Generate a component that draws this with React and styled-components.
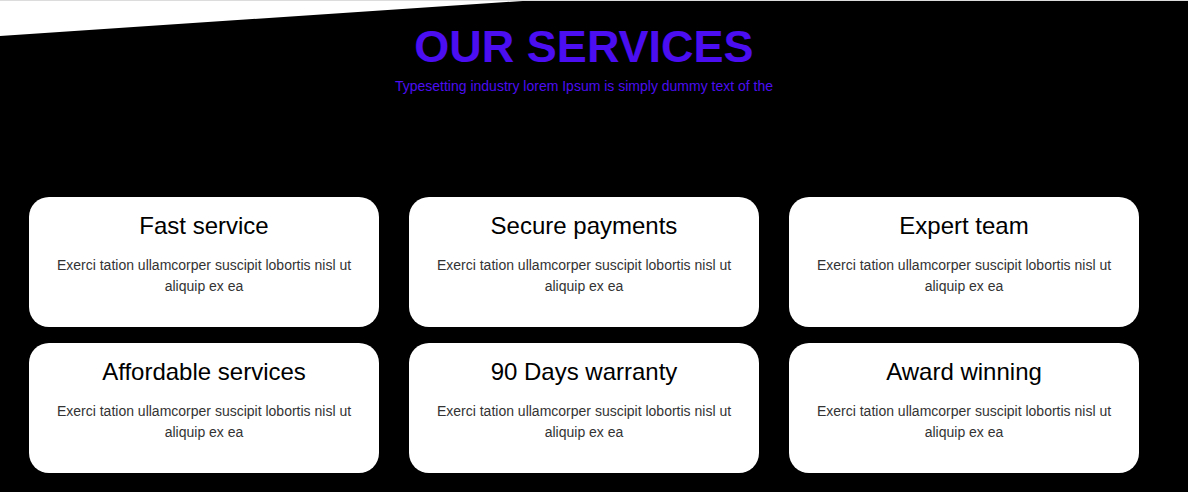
import styled, { createGlobalStyle } from "styled-components";

const GlobalStyle = createGlobalStyle`
  html, body {
    margin: 0;
    padding: 0;
    background: #ffffff;
  }
  body {
    font-family: "Liberation Sans", Arial, sans-serif;
    border-top: 1px solid #dcdcdc;
  }
`;

const Section = styled.section`
  background: #000000;
  min-height: 491px;
  box-sizing: border-box;
  padding-top: 20px;
  clip-path: polygon(0 35px, 44% 0, 100% 0, 100% 100%, 0 100%);
`;

const Header = styled.header`
  text-align: center;
  color: #4b0ef0;
  padding-right: 20px;
`;

const Title = styled.h1`
  margin: 0;
  font-size: 45px;
  font-weight: 700;
  line-height: 52px;
`;

const Subtitle = styled.p`
  margin: 5px 0 0;
  font-size: 14px;
  line-height: 16px;
`;

const Grid = styled.div`
  display: grid;
  grid-template-columns: repeat(3, 350px);
  column-gap: 30px;
  row-gap: 16px;
  padding: 0 0 0 29px;
  margin-top: 103px;
`;

const Card = styled.div`
  background: #ffffff;
  border-radius: 20px;
  height: 130px;
  box-sizing: border-box;
  padding: 15px 20px 0;
  text-align: center;
`;

const CardTitle = styled.h3`
  margin: 0;
  font-size: 24px;
  font-weight: 400;
  line-height: 28px;
  color: #000000;
`;

const CardText = styled.p`
  margin: 15px 0 0;
  font-size: 14px;
  line-height: 21px;
  color: #333333;
`;

const services = [
  "Fast service",
  "Secure payments",
  "Expert team",
  "Affordable services",
  "90 Days warranty",
  "Award winning",
];

export default function App() {
  return (
    <>
      <GlobalStyle />
      <Section>
        <Header>
          <Title>OUR SERVICES</Title>
          <Subtitle>Typesetting industry lorem Ipsum is simply dummy text of the</Subtitle>
        </Header>
        <Grid>
          {services.map((name) => (
            <Card key={name}>
              <CardTitle>{name}</CardTitle>
              <CardText>
                Exerci tation ullamcorper suscipit lobortis nisl ut aliquip ex ea
              </CardText>
            </Card>
          ))}
        </Grid>
      </Section>
    </>
  );
}
